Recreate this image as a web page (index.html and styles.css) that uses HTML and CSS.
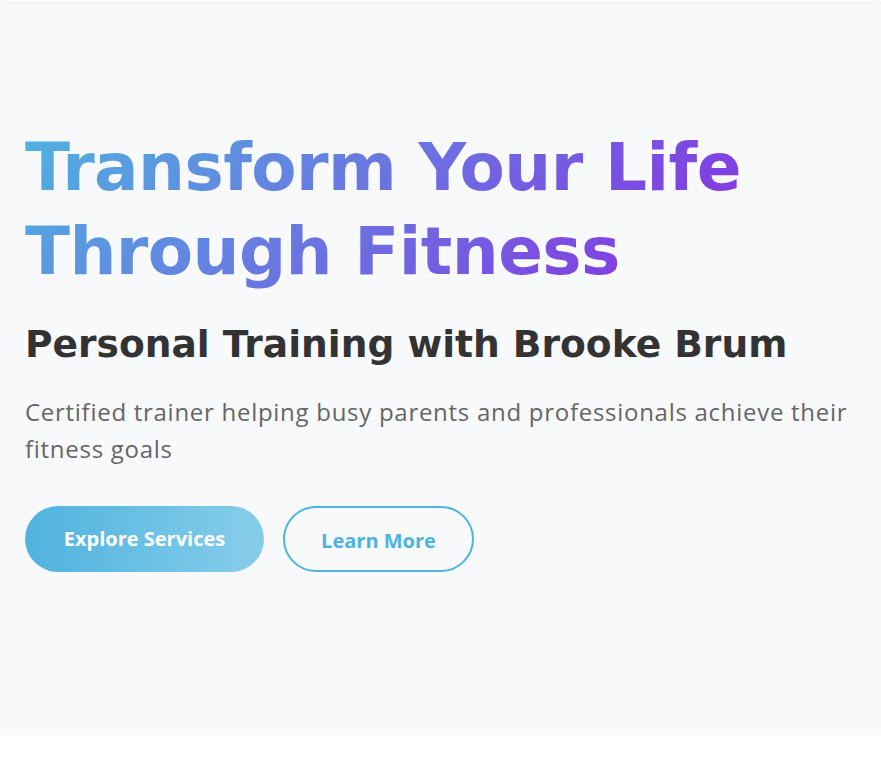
FILE: index.html
```html
<!DOCTYPE html>
<html lang="en">
<head>
<meta charset="utf-8">
<title>Brooke Brum Fitness</title>
<link rel="stylesheet" href="styles.css">
</head>
<body>
<header class="topbar"></header>
<section class="hero">
  <div class="hero-content">
    <h1 class="hero-title">Transform Your Life<br>Through Fitness</h1>
    <h2 class="hero-subtitle">Personal Training with Brooke Brum</h2>
    <p class="hero-text">Certified trainer helping busy parents and professionals achieve their fitness goals</p>
    <div class="hero-actions">
      <a class="btn btn-primary" href="#services">Explore Services</a>
      <a class="btn btn-outline" href="#about">Learn More</a>
    </div>
  </div>
</section>
</body>
</html>
```

FILE: styles.css
```css
* { box-sizing: border-box; }
html, body { margin: 0; padding: 0; background: #ffffff; }
body { font-family: "Open Sans", "DejaVu Sans", sans-serif; }

.topbar {
  position: relative;
  z-index: 2;
  height: 1px;
  background: #ffffff;
  box-shadow: 0 2px 10px rgba(0, 0, 0, 0.1);
}

.hero {
  background: #f8f9fb;
  height: 734px;
  padding: 125px 20px 0 25px;
}

.hero-title {
  display: inline-block;
  margin: 0;
  font-family: "DejaVu Sans", sans-serif;
  font-weight: 700;
  font-size: 66px;
  line-height: 84px;
  letter-spacing: -0.6px;
  background: linear-gradient(135deg, #4fb3e0 0%, #8a2be2 100%);
  -webkit-background-clip: text;
  background-clip: text;
  color: transparent;
}

.hero-subtitle {
  margin: 26px 0 0 0;
  font-family: "DejaVu Sans", sans-serif;
  font-weight: 700;
  font-size: 37.6px;
  line-height: 48px;
  color: #333333;
}

.hero-text {
  margin: 25px 0 0 0;
  font-family: "Open Sans", sans-serif;
  font-size: 24px;
  line-height: 37px;
  letter-spacing: 0.72px;
  color: #666666;
}

.hero-actions {
  display: flex;
  gap: 19px;
  margin-top: 39px;
}

.btn {
  display: inline-flex;
  align-items: center;
  justify-content: center;
  height: 66px;
  border-radius: 40px;
  font-family: "Open Sans", sans-serif;
  font-weight: 700;
  font-size: 20px;
  text-decoration: none;
}

.btn-primary {
  width: 239px;
  background: linear-gradient(90deg, #4fb3de 0%, #87cdea 100%);
  color: #ffffff;
  padding-bottom: 2px;
}

.btn-outline {
  width: 191px;
  border: 2px solid #4fb3e0;
  color: #4fb3e0;
  background: transparent;
  padding-top: 2px;
}
```
